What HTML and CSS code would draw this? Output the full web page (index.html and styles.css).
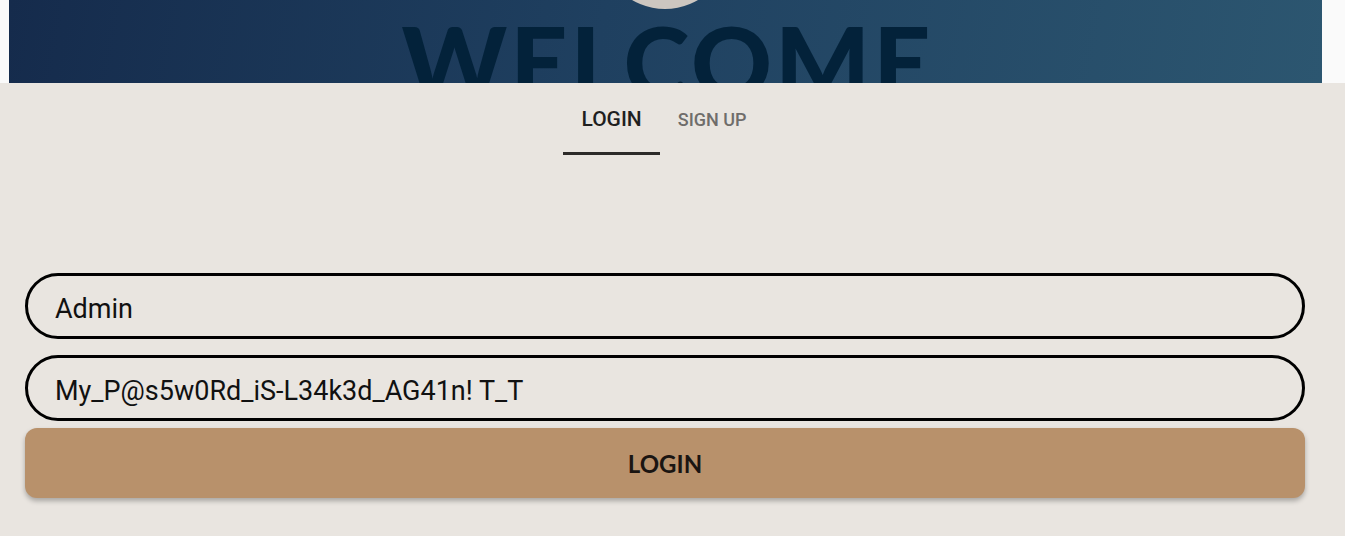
FILE: index.html
```html
<!DOCTYPE html>
<html lang="en">
<head>
<meta charset="utf-8">
<title>Welcome</title>
<link rel="stylesheet" href="styles.css">
</head>
<body>
<header class="top">
  <div class="banner">
    <div class="avatar"></div>
    <h1 class="welcome">WELCOME</h1>
  </div>
</header>
<main class="panel">
  <nav class="tabs">
    <div class="tab tab-active">LOGIN</div>
    <div class="tab">SIGN UP</div>
  </nav>
  <form class="form">
    <input class="field" type="text" value="Admin">
    <input class="field" type="text" value="My_P@s5w0Rd_iS-L34k3d_AG41n! T_T">
    <button class="submit" type="button">LOGIN</button>
  </form>
</main>
</body>
</html>
```

FILE: styles.css
```css
html, body {
  margin: 0;
  padding: 0;
}
body {
  background: #e9e5e0;
  width: 1345px;
  height: 536px;
  overflow: hidden;
}
.top {
  background: #fafafa;
  padding: 0 23px 0 9px;
  height: 83px;
}
.banner {
  position: relative;
  height: 83px;
  overflow: hidden;
  background: linear-gradient(100deg, #152b4c 0%, #1f4060 45%, #2c5670 100%);
  text-align: center;
}
.avatar {
  position: absolute;
  left: 591px;
  top: -121px;
  width: 130px;
  height: 130px;
  border-radius: 50%;
  background: #ccc6c0;
}
.welcome {
  margin: 0;
  padding-top: 10px;
  padding-left: 4px;
  font-family: "Lato", "Liberation Sans", sans-serif;
  font-weight: 900;
  font-size: 100px;
  line-height: 1;
  letter-spacing: 3px;
  color: #03223a;
}
.tabs {
  display: flex;
  justify-content: center;
  align-items: baseline;
  padding-right: 17px;
}
.tab {
  font-family: "Roboto", "Liberation Sans", sans-serif;
  font-weight: 500;
  font-size: 18px;
  line-height: 24px;
  color: #6f6d6b;
  padding: 24px 18px 24px;
}
.tab-active {
  font-size: 21px;
  color: #1f1f1f;
  padding: 24px 18px 21px;
  border-bottom: 3px solid #2d2b29;
}
.form {
  display: flex;
  flex-direction: column;
  padding: 117px 40px 0 25px;
}
.field {
  box-sizing: border-box;
  height: 66px;
  border: 3px solid #000;
  border-radius: 33px;
  background: transparent;
  padding: 5px 27px 0;
  font-family: "Roboto", "Liberation Sans", sans-serif;
  font-size: 27px;
  color: #111;
  outline: none;
}
.field + .field {
  margin-top: 16px;
}
.submit {
  margin-top: 7px;
  height: 70px;
  border: 0;
  border-radius: 12px;
  background: #b8916b;
  box-shadow: 0 3px 5px rgba(0, 0, 0, 0.28);
  font-family: "Lato", "Liberation Sans", sans-serif;
  font-weight: 700;
  font-size: 24px;
  color: #1a1512;
  padding: 0;
}
```
